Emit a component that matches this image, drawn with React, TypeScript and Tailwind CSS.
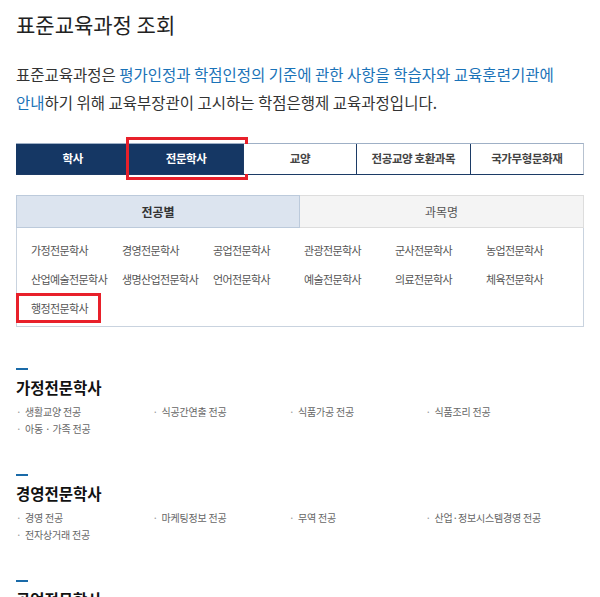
import React from "react";

const mainTabs = ["학사", "전문학사", "교양", "전공교양 호환과목", "국가무형문화재"];
const majors = [
  "가정전문학사", "경영전문학사", "공업전문학사", "관광전문학사", "군사전문학사", "농업전문학사",
  "산업예술전문학사", "생명산업전문학사", "언어전문학사", "예술전문학사", "의료전문학사", "체육전문학사",
  "행정전문학사",
];
const sections = [
  { title: "가정전문학사", items: ["생활교양 전공", "식공간연출 전공", "식품가공 전공", "식품조리 전공", "아동 · 가족 전공"] },
  { title: "경영전문학사", items: ["경영 전공", "마케팅정보 전공", "무역 전공", "산업·정보시스템경영 전공", "전자상거래 전공"] },
  { title: "공업전문학사", items: ["건축 전공", "기계 전공", "전기 전공", "전자 전공"] },
];

export default function App() {
  return (
    <div className="w-[600px] h-[597px] overflow-hidden bg-white px-4 text-[#333]" style={{ fontFamily: '"Noto Sans CJK KR", "Noto Sans", sans-serif' }}>
      <h1 className="pt-[6px] text-[21px] leading-[36px] text-[#222] font-normal">표준교육과정 조회</h1>
      <p className="mt-[18px] text-[15.5px] leading-[28px] text-[#333] whitespace-nowrap">
        표준교육과정은 <span className="text-[#1a73b8]">평가인정과 학점인정의 기준에 관한 사항을 학습자와 교육훈련기관에</span>
        <br />
        <span className="text-[#1a73b8]">안내</span>하기 위해 교육부장관이 고시하는 학점은행제 교육과정입니다.
      </p>
      <div className="mt-[27px] grid grid-cols-5 h-[32px] border-t border-[#9fb0c6] border-b border-b-[#1c3b66] border-r border-r-[#b7c2d0]">
        {mainTabs.map((t, i) => {
          const active = i < 2;
          return (
            <div
              key={t}
              className={
                "relative flex items-center justify-center text-[11.5px] font-semibold tracking-[-0.4px] " +
                (active ? "bg-[#153764] text-white" : "bg-white text-[#444] border-l border-[#1c3b66]")
              }
            >
              {t}
              {i === 1 && <div className="absolute -left-[3px] -right-[5px] -top-[7px] -bottom-[6px] border-[3px] border-[#e8202a]" />}
            </div>
          );
        })}
      </div>
      <div className="mt-[20px] grid grid-cols-2 h-[33px]">
        <div className="flex items-center justify-center bg-[#dce4ef] border border-[#bccadb] text-[12px] font-bold text-[#333]">전공별</div>
        <div className="flex items-center justify-center bg-[#f4f4f4] border border-[#dddddd] border-l-0 text-[12px] text-[#555]">과목명</div>
      </div>
      <div className="border border-t-0 border-[#c9d3df] pl-[14px] pt-[13px] pb-[8px] grid grid-cols-[repeat(6,91px)] gap-y-[10px]">
        {majors.map((m, i) => (
          <div key={m} className="relative h-[19px] text-[11px] tracking-[-0.6px] leading-[19px] text-[#555] whitespace-nowrap">
            {m}
            {i === 12 && <div className="absolute -left-[15px] w-[85px] -top-[6px] -bottom-[5px] border-[3px] border-[#e8202a]" />}
          </div>
        ))}
      </div>
      <div className="mt-[41px] flex flex-col gap-[37px]">
        {sections.map((s) => (
          <div key={s.title}>
            <div className="w-[12px] h-[2px] bg-[#1a6aa8]" />
            <h2 className="mt-[5px] text-[15.5px] leading-[24px] font-bold text-[#111]">{s.title}</h2>
            <ul className="mt-[4px] grid grid-cols-[repeat(4,136.5px)]">
              {s.items.map((it) => (
                <li key={it} className="flex items-center h-[17px] text-[10px] tracking-[-0.2px] text-[#666] whitespace-nowrap">
                  <span className="w-[9px] text-[#999]">·</span>
                  {it}
                </li>
              ))}
            </ul>
          </div>
        ))}
      </div>
    </div>
  );
}
